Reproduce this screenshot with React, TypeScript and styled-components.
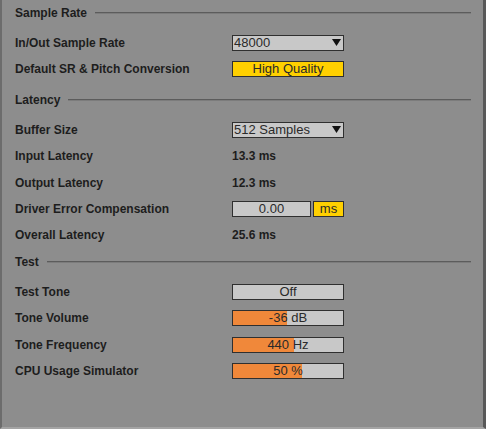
import React from "react";
import styled, { createGlobalStyle } from "styled-components";

const GlobalStyle = createGlobalStyle`
    html, body {
        margin: 0;
        padding: 0;
        background: #8d8d8d;
    }
    body {
        font-family: "Liberation Sans", Arial, sans-serif;
    }
`;

const Panel = styled.div`
    box-sizing: border-box;
    width: 486px;
    height: 429px;
    background: #8d8d8d;
    border-left: 2px solid #6c6c6c;
    border-right: 3px solid #585858;
    border-bottom: 2px solid #a4a4a4;
    padding-left: 13px;
    overflow: hidden;
`;

const Section = styled.section<{ $gap: number }>`
    margin-top: ${(p) => p.$gap}px;
`;

const Header = styled.div`
    display: flex;
    align-items: center;
    height: 26px;
    padding-right: 12px;
    font-size: 12px;
    font-weight: bold;
    color: #1d1d1d;
    &::after {
        content: "";
        flex: 1;
        height: 1px;
        margin-left: 8px;
        background: #5c5c5c;
        border-bottom: 1px solid #7c7c7c;
    }
`;

const Rows = styled.div`
    padding-top: 4px;
`;

const Row = styled.div`
    display: grid;
    grid-template-columns: 217px 112px;
    align-items: center;
    height: 26.25px;
`;

const Label = styled.div`
    font-size: 12px;
    font-weight: bold;
    color: #1d1d1d;
    white-space: nowrap;
`;

const Value = styled(Label)``;

const Box = styled.div<{ $bg?: string }>`
    position: relative;
    box-sizing: border-box;
    height: 16px;
    border: 1px solid #2f2f2f;
    background: ${(p) => p.$bg || "#c8c8c8"};
    font-size: 13px;
    line-height: 14px;
    color: #2a2a2a;
    overflow: hidden;
`;

const Select = styled(Box)`
    padding-left: 1px;
`;

const Arrow = styled.svg`
    position: absolute;
    right: 2px;
    top: 3px;
`;

const Centered = styled(Box)`
    text-align: center;
`;

const Fill = styled.div`
    position: absolute;
    left: 0;
    top: 0;
    bottom: 0;
    background: #f0883a;
`;

const FillText = styled.span`
    position: relative;
`;

const Pair = styled.div`
    display: grid;
    grid-template-columns: 79px 31px;
    gap: 2px;
`;

const Yellow = "#ffd000";

function Dropdown(props: { value: string }) {
    return (
        <Select>
            {props.value}
            <Arrow width="9" height="7" viewBox="0 0 9 7">
                <polygon points="0,0 9,0 4.5,7" fill="#111" />
            </Arrow>
        </Select>
    );
}

function Bar(props: { text: string; pct: number }) {
    return (
        <Centered>
            <Fill style={{ width: `${props.pct}%` }} />
            <FillText>{props.text}</FillText>
        </Centered>
    );
}

export default function App() {
    return (
        <>
            <GlobalStyle />
            <Panel>
                <Section $gap={0}>
                    <Header>Sample Rate</Header>
                    <Rows>
                        <Row>
                            <Label>In/Out Sample Rate</Label>
                            <Dropdown value="48000" />
                        </Row>
                        <Row>
                            <Label>Default SR &amp; Pitch Conversion</Label>
                            <Centered $bg={Yellow}>High Quality</Centered>
                        </Row>
                    </Rows>
                </Section>

                <Section $gap={4.5}>
                    <Header>Latency</Header>
                    <Rows>
                        <Row>
                            <Label>Buffer Size</Label>
                            <Dropdown value="512 Samples" />
                        </Row>
                        <Row>
                            <Label>Input Latency</Label>
                            <Value>13.3 ms</Value>
                        </Row>
                        <Row>
                            <Label>Output Latency</Label>
                            <Value>12.3 ms</Value>
                        </Row>
                        <Row>
                            <Label>Driver Error Compensation</Label>
                            <Pair>
                                <Centered>0.00</Centered>
                                <Centered $bg={Yellow}>ms</Centered>
                            </Pair>
                        </Row>
                        <Row>
                            <Label>Overall Latency</Label>
                            <Value>25.6 ms</Value>
                        </Row>
                    </Rows>
                </Section>

                <Section $gap={0.75}>
                    <Header>Test</Header>
                    <Rows>
                        <Row>
                            <Label>Test Tone</Label>
                            <Centered>Off</Centered>
                        </Row>
                        <Row>
                            <Label>Tone Volume</Label>
                            <Bar text="-36 dB" pct={49} />
                        </Row>
                        <Row>
                            <Label>Tone Frequency</Label>
                            <Bar text="440 Hz" pct={55} />
                        </Row>
                        <Row>
                            <Label>CPU Usage Simulator</Label>
                            <Bar text="50 %" pct={63} />
                        </Row>
                    </Rows>
                </Section>
            </Panel>
        </>
    );
}
